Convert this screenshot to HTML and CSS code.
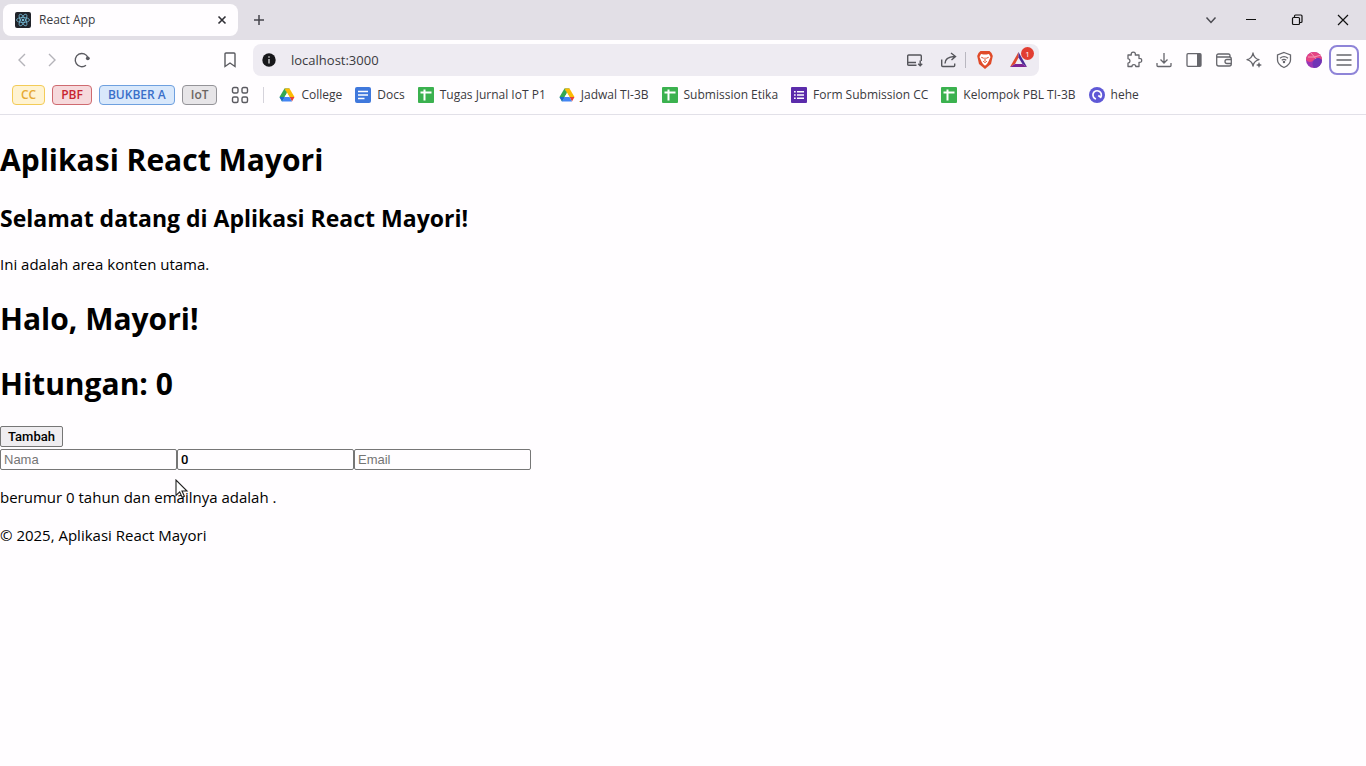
FILE: index.html
```html
<!DOCTYPE html>
<html lang="id">
<head>
<meta charset="utf-8">
<title>React App</title>
<link rel="stylesheet" href="styles.css">
</head>
<body>
<svg class="defs" aria-hidden="true">
  <symbol id="drive" viewBox="0 0 16 16"><path d="M5.5 1.5h5L8 6z" fill="#188038"/><path d="M5.5 1.5 8 6l-5 8.500L.5 10z" fill="#34a853"/><path d="M5.500 1.500h5L15.500 10h-5z" fill="#fbbc04"/><path d="M10.500 10h5L13 14.500z" fill="#ea4335"/><path d="M5.500 10h5l2.500 4.500H3z" fill="#4285f4"/><path d="M.5 10h5L3 14.500z" fill="#1967d2"/><path d="M8 6l2.300 4H5.700z" fill="#fff"/></symbol>
  <symbol id="sheet" viewBox="0 0 16 16"><rect width="16" height="16" rx="1" fill="#3bb14f"/><path d="M2.500 5.500h11M6.500 2.500v11" stroke="#fff" stroke-width="2"/></symbol>
</svg>
<header class="browser">
  <div class="tabs">
    <div class="tab">
      <svg class="i16" viewBox="0 0 16 16"><rect width="16" height="16" rx="2" fill="#20232a"/><g fill="none" stroke="#74b7d3" stroke-width=".8"><ellipse cx="8" cy="8" rx="6.500" ry="2.500"/><ellipse cx="8" cy="8" rx="6.500" ry="2.500" transform="rotate(60 8 8)"/><ellipse cx="8" cy="8" rx="6.500" ry="2.500" transform="rotate(120 8 8)"/></g><circle cx="8" cy="8" r="1.300" fill="#74b7d3"/></svg>
      <span class="tab-title">React App</span>
      <button class="icon" aria-label="Tutup tab"><svg class="i16" viewBox="0 0 16 16"><path d="M4.500 4.500l7 7M11.500 4.500l-7 7" stroke="#303036" stroke-width="1.600"/></svg></button>
    </div>
    <button class="icon new-tab" aria-label="Tab baru"><svg class="i16" viewBox="0 0 16 16"><path d="M8 3v10M3 8h10" stroke="#45454c" stroke-width="1.500"/></svg></button>
    <div class="window">
      <button class="icon search-tabs" aria-label="Cari tab"><svg class="i16" viewBox="0 0 16 16"><path d="M3.500 5.500 8 10.500l4.500-5" fill="none" stroke="#4a4a50" stroke-width="1.500"/></svg></button>
      <button class="icon" aria-label="Kecilkan"><svg class="i16" viewBox="0 0 16 16"><path d="M3 7.500h10" stroke="#111" stroke-width="1"/></svg></button>
      <button class="icon" aria-label="Pulihkan"><svg class="i16" viewBox="0 0 16 16" fill="none" stroke="#111" stroke-width="1.200"><rect x="3.500" y="5.500" width="7" height="7" rx="1"/><path d="M5.500 5.500V4q0-1 1-1H12q1 0 1 1v5.500q0 1-1 1h-1.500"/></svg></button>
      <button class="icon" aria-label="Tutup"><svg class="i16" viewBox="0 0 16 16"><path d="M3 3l10 10M13 3 3 13" stroke="#111" stroke-width="1.200"/></svg></button>
    </div>
  </div>
  <nav class="toolbar">
    <div class="nav">
      <button class="icon" aria-label="Kembali"><svg class="i18" viewBox="0 0 18 18"><path d="M12 3 6 9l6 6" fill="none" stroke="#b4b3b9" stroke-width="1.400"/></svg></button>
      <button class="icon" aria-label="Maju"><svg class="i18" viewBox="0 0 18 18"><path d="m6 3 6 6-6 6" fill="none" stroke="#b4b3b9" stroke-width="1.400"/></svg></button>
      <button class="icon" aria-label="Muat ulang"><svg class="i18" viewBox="0 0 18 18"><path d="M13 14.200A6.600 6.600 0 1 1 15 6.700" fill="none" stroke="#5a5a60" stroke-width="1.400"/><circle cx="14.800" cy="7.300" r="1.900" fill="#5a5a60"/></svg></button>
    </div>
    <button class="icon bookmark" aria-label="Simpan bookmark"><svg class="i18" viewBox="0 0 18 18"><path d="M4 3q0-1 1-1h8q1 0 1 1v12.500L9 12l-5 3.500z" fill="none" stroke="#5a5a60" stroke-width="1.400"/></svg></button>
    <div class="address">
      <svg class="i16" viewBox="0 0 16 16"><circle cx="8" cy="8" r="6.700" fill="#17171a"/><path d="M8 7v4.500M8 4.200v1.500" stroke="#ddd" stroke-width="1.300"/></svg>
      <input class="url" aria-label="Alamat" value="localhost:3000">
      <button class="icon" aria-label="Pasang aplikasi"><svg class="i18" viewBox="0 0 18 18" fill="none" stroke="#55555b" stroke-width="1.400"><path d="M10.500 14.300H2.700q-1 0-1-1V5q0-1 1-1h11.600q1 0 1 1v5M2 11.500h8"/><path d="M14.200 9.500v5.300m-2-2 2 2 2-2"/></svg></button>
      <button class="icon share" aria-label="Bagikan"><svg class="i18" viewBox="0 0 18 18" fill="none" stroke="#55555b" stroke-width="1.400"><path d="M1.700 8.500v6q0 1 1 1h11q1 0 1-1v-2M5 12.500q0-6.500 9.500-7M11 2l4.500 3.500L11.500 9"/></svg></button>
      <span class="rule"></span>
      <button class="icon" aria-label="Brave Shields"><svg class="i20" viewBox="0 0 20 20"><path d="M5.500 1h9l2 2 1.300 3-1.800 8-6 5-6-5-1.800-8 1.300-3z" fill="#e04a29"/><path d="m6 4 2.500.600h3L14 4l1.500 3-2 4.500L12 14l-2 1.700L8 14l-1.500-2.500-2-4.500z" fill="#fff"/><path d="M6.300 7.300l2.500 1M13.700 7.300l-2.500 1M10 7.500v3.500m-1.800.3L10 12.500l1.800-1.200" fill="none" stroke="#e04a29"/></svg></button>
      <button class="icon rewards" aria-label="Brave Rewards, 1 notifikasi"><svg class="i20" viewBox="0 0 20 20"><path d="M9.500 2 1 17l5-3 3.500-6.500z" fill="#de482f"/><path d="M9.500 2 18 17l-4.500-3-4-6.500z" fill="#4b2b97"/><path d="m6 14-5 3h17l-4.500-3z" fill="#7d2392"/></svg><span class="badge">1</span></button>
    </div>
    <div class="actions">
      <button class="icon" aria-label="Ekstensi"><svg class="i18" viewBox="0 0 18 18"><path d="M3 4h3.300q-.5-2.800 2-2.800t2 2.800H14v3.500q2.700-.3 2.700 1.900T14 11.300V15.500h-3.200q0-1.900-1.900-1.900T7 15.500H3v-3.300q2-.300 2-2.200T3 7.700z" fill="none" stroke="#66666c" stroke-width="1.300" stroke-linejoin="round"/></svg></button>
      <button class="icon" aria-label="Unduhan"><svg class="i18" viewBox="0 0 18 18" fill="none" stroke="#66666c" stroke-width="1.300"><path d="M9 2v10M5.500 8.500 9 12l3.500-3.500M2 12v2.500q0 1 1 1h12q1 0 1-1V12"/></svg></button>
      <button class="icon" aria-label="Bilah samping"><svg class="i18" viewBox="0 0 18 18"><rect x="2" y="2.700" width="14" height="12.600" rx="1" fill="none" stroke="#66666c" stroke-width="1.300"/><path d="M12 3h4v12h-4z" fill="#66666c"/></svg></button>
      <button class="icon" aria-label="Dompet"><svg class="i18" viewBox="0 0 18 18" fill="none" stroke="#66666c" stroke-width="1.300"><path d="M15 5.800V4.500q0-1.500-1.500-1.500H3.500Q1.700 3 1.700 4.500v8.500q0 2 2 2h10.600q2 0 2-2V8q0-2-2-2H2M16.300 8.500H12q-2 0-2 2t2 2h4.300"/></svg></button>
      <button class="icon" aria-label="Leo AI"><svg class="i18" viewBox="0 0 18 18"><path d="M8 2q1 5.500 6 6.700Q9 10 8 15 7 10 2 8.700 7 7.500 8 2z" fill="none" stroke="#66666c" stroke-width="1.300" stroke-linejoin="round"/><path d="m14 11 .9 2.100L17 14l-2.100.900L14 17l-.9-2.100L11 14l2.100-.9z" fill="#66666c"/></svg></button>
      <button class="icon" aria-label="VPN"><svg class="i18" viewBox="0 0 18 18" fill="none" stroke="#66666c" stroke-width="1.300"><path d="M9 1.500 15.500 4v5q0 4.500-6.500 7.500Q2.500 13.500 2.500 9V4zM5 7.200q4-3 8 0M6.700 9.300q2.300-1.700 4.600 0"/><circle cx="9" cy="11" r=".6"/></svg></button>
      <button class="icon" aria-label="Profil"><svg class="i18" viewBox="0 0 18 18"><circle cx="9" cy="9" r="8" fill="#9b35b5"/><path d="M1 9a8 8 0 0 1 16 0Q13 5 9 9T1 9z" fill="#e64583"/><path d="M3 6q6 1 13-2M6 2l6 7" fill="none" stroke="#f49bb5"/><path d="M9 9q4-4 8 0a8 8 0 0 1-8 8q-3-4 0-8z" fill="#6f35b5"/></svg></button>
      <button class="icon menu" aria-label="Menu"><svg class="i18" viewBox="0 0 18 18"><path d="M1.500 4h15M1.500 9h15M1.500 14h15" stroke="#66666c" stroke-width="1.400"/></svg></button>
    </div>
  </nav>
  <nav class="bookmarks">
    <button class="group yellow">CC</button>
    <button class="group red">PBF</button>
    <button class="group blue">BUKBER A</button>
    <button class="group gray">IoT</button>
    <button class="icon all" aria-label="Semua grup"><svg class="i18" viewBox="0 0 18 18" fill="none" stroke="#5a5a60" stroke-width="1.400"><rect x="1.500" y="1.500" width="5.500" height="5.500" rx="1.500"/><rect x="11" y="1.500" width="5.500" height="5.500" rx="1.500"/><rect x="1.500" y="11" width="5.500" height="5.500" rx="1.500"/><rect x="11" y="11" width="5.500" height="5.500" rx="1.500"/></svg></button>
    <span class="rule"></span>
    <div class="links">
      <a href="#"><svg class="i16"><use href="#drive"/></svg>College</a>
      <a href="#"><svg class="i16" viewBox="0 0 16 16"><rect width="16" height="16" rx="2" fill="#3f78dc"/><path d="M3 4.500h10M3 8h10M3 11.500h6.500" stroke="#fff" stroke-width="1.600"/></svg>Docs</a>
      <a href="#"><svg class="i16"><use href="#sheet"/></svg>Tugas Jurnal IoT P1</a>
      <a href="#"><svg class="i16"><use href="#drive"/></svg>Jadwal TI-3B</a>
      <a href="#"><svg class="i16"><use href="#sheet"/></svg>Submission Etika</a>
      <a href="#"><svg class="i16" viewBox="0 0 16 16"><rect width="16" height="16" rx="1" fill="#5b2bab"/><path d="M3 4.700h1.700M3 8h1.700M3 11.300h1.700M6 4.700h7M6 8h7M6 11.300h7" stroke="#fff" stroke-width="1.600"/></svg>Form Submission CC</a>
      <a href="#"><svg class="i16"><use href="#sheet"/></svg>Kelompok PBL TI-3B</a>
      <a href="#"><svg class="i16" viewBox="0 0 16 16"><circle cx="8" cy="8" r="8" fill="#5f58d6"/><path d="M7 12A4.200 4.200 0 1 1 11.700 10.200L9.300 8.500" fill="none" stroke="#fff" stroke-width="1.700"/></svg>hehe</a>
    </div>
  </nav>
</header>
<main class="app">
  <h1>Aplikasi React Mayori</h1>
  <h2>Selamat datang di Aplikasi React Mayori!</h2>
  <p>Ini adalah area konten utama.</p>
  <h1>Halo, Mayori!</h1>
  <h1>Hitungan: 0</h1>
  <button class="add">Tambah</button>
  <form class="fields">
    <input type="text" placeholder="Nama" aria-label="Nama">
    <input type="text" class="age" value="0" aria-label="Umur">
    <input type="email" placeholder="Email" aria-label="Email">
  </form>
  <p>berumur 0 tahun dan emailnya adalah .</p>
  <footer>© 2025, Aplikasi React Mayori</footer>
  <svg class="cursor" viewBox="0 0 14 20" aria-hidden="true"><path d="M1 1v15.500l3.700-3.600 2.400 5.300 2.300-1-2.400-5.200h5z" fill="#fff" stroke="#222" stroke-width="1.100"/></svg>
</main>
</body>
</html>
```
FILE: styles.css
```css
* { box-sizing: border-box; }
body {
  margin: 0;
  background: #fffdff;
  color: #000;
  font: 15px/22px "Open Sans", "Noto Sans", sans-serif;
}
button, input { font: inherit; color: inherit; }
svg { display: block; flex: none; }
.defs { position: absolute; width: 0; height: 0; }
.i16 { width: 16px; height: 16px; }
.i18 { width: 18px; height: 18px; }
.i20 { width: 20px; height: 20px; }
.icon {
  display: flex;
  align-items: center;
  justify-content: center;
  flex: none;
  padding: 0;
  border: 0;
  background: none;
}

.browser { border-bottom: 1px solid #e2e0e8; font-size: 12px; line-height: 16px; color: #3a3a40; }
.tabs { display: flex; align-items: center; height: 40px; padding-left: 3px; background: #e2dfe6; }
.tab {
  display: flex;
  align-items: center;
  gap: 8px;
  width: 235px;
  height: 32px;
  padding: 0 8px 0 12px;
  border-radius: 8px;
  background: #fffdff;
}
.tab-title { flex: 1; }
.new-tab { margin-left: 13px; }
.window { display: flex; margin-left: auto; }
.window .icon { width: 46px; height: 32px; }
.window .search-tabs { width: 34px; }

.toolbar { display: flex; align-items: center; height: 40px; padding: 0 7px 0 13px; }
.nav { display: flex; gap: 12px; }
.bookmark { margin-left: 130px; }
.address {
  display: flex;
  align-items: center;
  flex: 1;
  height: 32px;
  margin-left: 14px;
  padding: 0 10px 0 8px;
  border-radius: 8px;
  background: #eeebf2;
}
.url {
  flex: 1;
  min-width: 0;
  margin-left: 14px;
  padding: 0;
  border: 0;
  background: none;
  font-size: 13px;
}
.share { margin-left: 16px; }
.rule { width: 1px; height: 16px; background: #b9b7c0; }
.address .rule { margin: 0 9px 0 7px; }
.rewards { position: relative; margin-left: 14px; }
.badge {
  position: absolute;
  top: -3px;
  right: -5px;
  width: 13px;
  height: 13px;
  border-radius: 50%;
  background: #e23d32;
  color: #fff;
  font-size: 8px;
  line-height: 13px;
}
.actions { display: flex; align-items: center; gap: 12px; margin-left: 86px; }
.menu { width: 30px; height: 30px; margin-left: -6px; border: 2px solid #8f84d8; border-radius: 8px; }

.bookmarks { display: flex; align-items: center; height: 34px; padding: 0 12px 4px; }
.group {
  height: 20px;
  margin-right: 7px;
  padding: 0 8px;
  border: 1px solid;
  border-radius: 4px;
  font-weight: 600;
  font-size: 12px;
  line-height: 16px;
}
.yellow { color: #e6aa35; background: #fff3d2; border-color: #f3cb58; }
.red { color: #c8242f; background: #f6d9dc; border-color: #cf6a70; }
.blue { color: #3a6fc9; background: #d9e8fb; border-color: #6ea0df; }
.gray { color: #6b6562; background: #e7e5e8; border-color: #949398; }
.all { margin-left: 7px; }
.bookmarks .rule { margin: 0 15px 0 14px; background: #d5d3db; }
.links { display: flex; gap: 13px; }
.links a { display: flex; align-items: center; gap: 6px; color: inherit; text-decoration: none; white-space: nowrap; }

.app { position: relative; padding-top: 1px; }
h1 { margin: 22px 0 21px; font-size: 30px; line-height: 43px; font-weight: 700; }
h2 { margin: 20px 0 19px; font-size: 23px; line-height: 32px; font-weight: 700; }
p { margin: 16px 0; }
.add, .fields input {
  display: block;
  height: 21px;
  border: 1px solid #767676;
  border-radius: 2px;
  font: 13px/15px "Liberation Sans", sans-serif;
}
.add { padding: 0 7px; background: #efedf0; }
.add, .fields .age { font-family: Roboto, "Liberation Sans", sans-serif; font-weight: 500; }
.fields { display: flex; margin-top: 2px; }
.fields input { width: 177px; padding: 0 3px; background: #fffdff; }
.fields input::placeholder { color: #757575; }
.cursor { position: absolute; left: 175px; top: 364px; width: 14px; height: 20px; }
```
